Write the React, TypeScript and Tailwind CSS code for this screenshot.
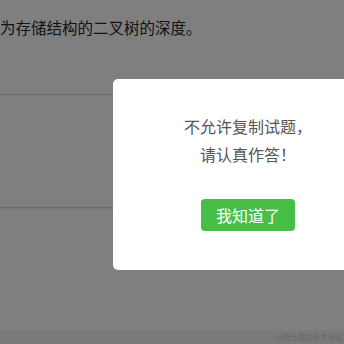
import React from "react";

export default function App() {
  return (
    <div
      className="relative w-[344px] h-[344px] overflow-hidden bg-white"
      style={{ fontFamily: '"Noto Sans CJK SC", "Noto Sans", sans-serif' }}
    >
      <div className="flex flex-col h-full">
        <div className="h-[94px] pt-[15px] text-[15.5px] leading-[24px] text-[#262626] whitespace-nowrap">
          为存储结构的二叉树的深度。
        </div>
        <div className="h-[2px] border-t border-[#d8d8d8] bg-[#f0f0f0]" />
        <div className="h-[111px]" />
        <div className="h-[2px] border-t border-[#d8d8d8] bg-[#f0f0f0]" />
        <div className="flex-1" />
        <div className="h-[14px] bg-[#f4f4f4] flex justify-end items-center pr-[1px]">
          <span className="text-[7.5px] leading-[10px] text-[#d0d0d0] whitespace-nowrap">@稀土掘金技术社区</span>
        </div>
      </div>

      <div className="absolute inset-0 bg-black/50" />

      <div className="absolute left-[113px] top-[79px] w-[270px] h-[191px] bg-white rounded-[5px] flex flex-col items-center pt-[33px]">
        <div className="text-[16px] leading-[28px] text-[#555] text-center whitespace-nowrap">
          <div>不允许复制试题，</div>
          <div>请认真作答！</div>
        </div>
        <button className="mt-[31px] w-[94px] h-[32px] rounded-[4px] bg-[#47bf46] text-white text-[16px] leading-[32px] font-normal">
          我知道了
        </button>
      </div>
    </div>
  );
}
